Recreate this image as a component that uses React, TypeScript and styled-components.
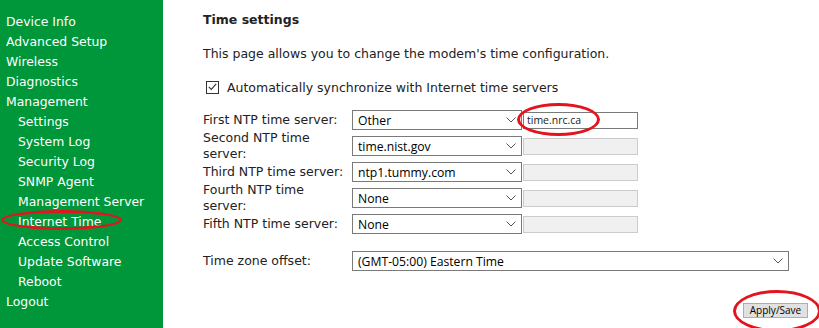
import styled, { createGlobalStyle } from "styled-components";

const GlobalStyle = createGlobalStyle`
  html, body {
    margin: 0;
    padding: 0;
    background: #ffffff;
  }
  body {
    font-family: "DejaVu Sans", Verdana, sans-serif;
  }
`;

const Page = styled.div`
  position: relative;
  display: flex;
  width: 819px;
  height: 328px;
  overflow: hidden;
`;

const Sidebar = styled.nav`
  width: 163px;
  flex: none;
  background: #00963a;
  padding-top: 12px;
  box-sizing: border-box;
`;

const NavItem = styled.div<{ $sub?: boolean }>`
  height: 20px;
  line-height: 20px;
  padding-left: ${(p) => (p.$sub ? 18 : 6)}px;
  color: #ffffff;
  font-size: 12.4px;
  white-space: nowrap;
`;

const Main = styled.main`
  flex: 1;
  padding: 11px 11px 0 40px;
  color: #222222;
  font-size: 12.5px;
`;

const Title = styled.h2`
  margin: 0;
  height: 18px;
  line-height: 18px;
  font-size: 12.5px;
  font-weight: bold;
`;

const Intro = styled.p`
  margin: 16px 0 0;
  line-height: 18px;
`;

const CheckRow = styled.label`
  display: flex;
  align-items: center;
  gap: 8px;
  margin: 15px 0 0 3px;
  height: 18px;
`;

const CheckBox = styled.span`
  width: 11px;
  height: 11px;
  border: 1px solid #333333;
  display: flex;
  align-items: center;
  justify-content: center;
`;

const FormGrid = styled.div`
  display: grid;
  grid-template-columns: 149px 170px 116px;
  grid-auto-rows: 26px;
  align-items: center;
  margin-top: 11px;
`;

const Label = styled.div`
  line-height: 16px;
  max-width: 142px;
`;

const SelectBox = styled.div<{ $wide?: boolean }>`
  position: relative;
  height: 20px;
  box-sizing: border-box;
  border: 1px solid #7a7a7a;
  background: #ffffff;
  display: flex;
  align-items: center;
  padding-left: 5px;
  font-family: "Open Sans", "Noto Sans", sans-serif;
  font-size: 12.2px;
  color: #000000;
  width: ${(p) => (p.$wide ? "437px" : "auto")};
`;

const Chevron = styled.svg`
  position: absolute;
  right: 5px;
  top: 6px;
`;

const TextBox = styled.div<{ $disabled?: boolean }>`
  height: 17px;
  margin-left: 1px;
  box-sizing: border-box;
  border: 1px solid ${(p) => (p.$disabled ? "#cccccc" : "#7a7a7a")};
  background: ${(p) => (p.$disabled ? "#f0f0f0" : "#ffffff")};
  font-family: "Open Sans", "Noto Sans", sans-serif;
  font-size: 10.5px;
  line-height: 15px;
  padding-left: 3px;
  color: #222222;
`;

const ZoneRow = styled.div`
  display: grid;
  grid-template-columns: 149px auto;
  align-items: center;
  margin-top: 14px;
  height: 20px;
`;

const Actions = styled.div`
  display: flex;
  justify-content: flex-end;
  margin-top: 32px;
`;

const Button = styled.button`
  height: 15px;
  width: 65px;
  padding: 0;
  border: 1px solid #adadad;
  background: #e1e1e1;
  font-family: "Open Sans", "Noto Sans", sans-serif;
  font-size: 10px;
  line-height: 13px;
  color: #000000;
`;

const Mark = styled.div<{ $x: number; $y: number; $w: number; $h: number }>`
  position: absolute;
  left: ${(p) => p.$x}px;
  top: ${(p) => p.$y}px;
  width: ${(p) => p.$w}px;
  height: ${(p) => p.$h}px;
  box-sizing: border-box;
  border: 3px solid #e3141e;
  border-radius: 50%;
  pointer-events: none;
`;

const DownArrow = () => (
  <Chevron width="10" height="6" viewBox="0 0 10 6">
    <path d="M0.5 0.5 L5 5 L9.5 0.5" fill="none" stroke="#555" strokeWidth="1" />
  </Chevron>
);

const nav: [string, boolean][] = [
  ["Device Info", false],
  ["Advanced Setup", false],
  ["Wireless", false],
  ["Diagnostics", false],
  ["Management", false],
  ["Settings", true],
  ["System Log", true],
  ["Security Log", true],
  ["SNMP Agent", true],
  ["Management Server", true],
  ["Internet Time", true],
  ["Access Control", true],
  ["Update Software", true],
  ["Reboot", true],
  ["Logout", false],
];

const servers = [
  { label: "First NTP time server:", value: "Other", text: "time.nrc.ca" },
  { label: "Second NTP time server:", value: "time.nist.gov" },
  { label: "Third NTP time server:", value: "ntp1.tummy.com" },
  { label: "Fourth NTP time server:", value: "None" },
  { label: "Fifth NTP time server:", value: "None" },
];

const App = () => {
  return (
    <Page>
      <GlobalStyle />
      <Sidebar>
        {nav.map(([name, sub]) => (
          <NavItem key={name} $sub={sub}>
            {name}
          </NavItem>
        ))}
      </Sidebar>
      <Main>
        <Title>Time settings</Title>
        <Intro>This page allows you to change the modem's time configuration.</Intro>
        <CheckRow>
          <CheckBox>
            <svg width="9" height="8" viewBox="0 0 9 8">
              <path d="M0.8 3.8 L3.3 6.4 L8.2 0.8" fill="none" stroke="#333" strokeWidth="1.1" />
            </svg>
          </CheckBox>
          Automatically synchronize with Internet time servers
        </CheckRow>
        <FormGrid>
          {servers.map((s) => (
            <>
              <Label key={s.label + "l"}>{s.label}</Label>
              <SelectBox key={s.label + "s"}>
                {s.value}
                <DownArrow />
              </SelectBox>
              <TextBox key={s.label + "t"} $disabled={!s.text}>
                {s.text}
              </TextBox>
            </>
          ))}
        </FormGrid>
        <ZoneRow>
          <Label>Time zone offset:</Label>
          <SelectBox $wide>
            (GMT-05:00) Eastern Time
            <DownArrow />
          </SelectBox>
        </ZoneRow>
        <Actions>
          <Button>Apply/Save</Button>
        </Actions>
      </Main>
      <Mark $x={1} $y={210} $w={121} $h={20} />
      <Mark $x={517} $y={103} $w={83} $h={33} />
      <Mark $x={733} $y={290} $w={88} $h={42} />
    </Page>
  );
};

export default App;
